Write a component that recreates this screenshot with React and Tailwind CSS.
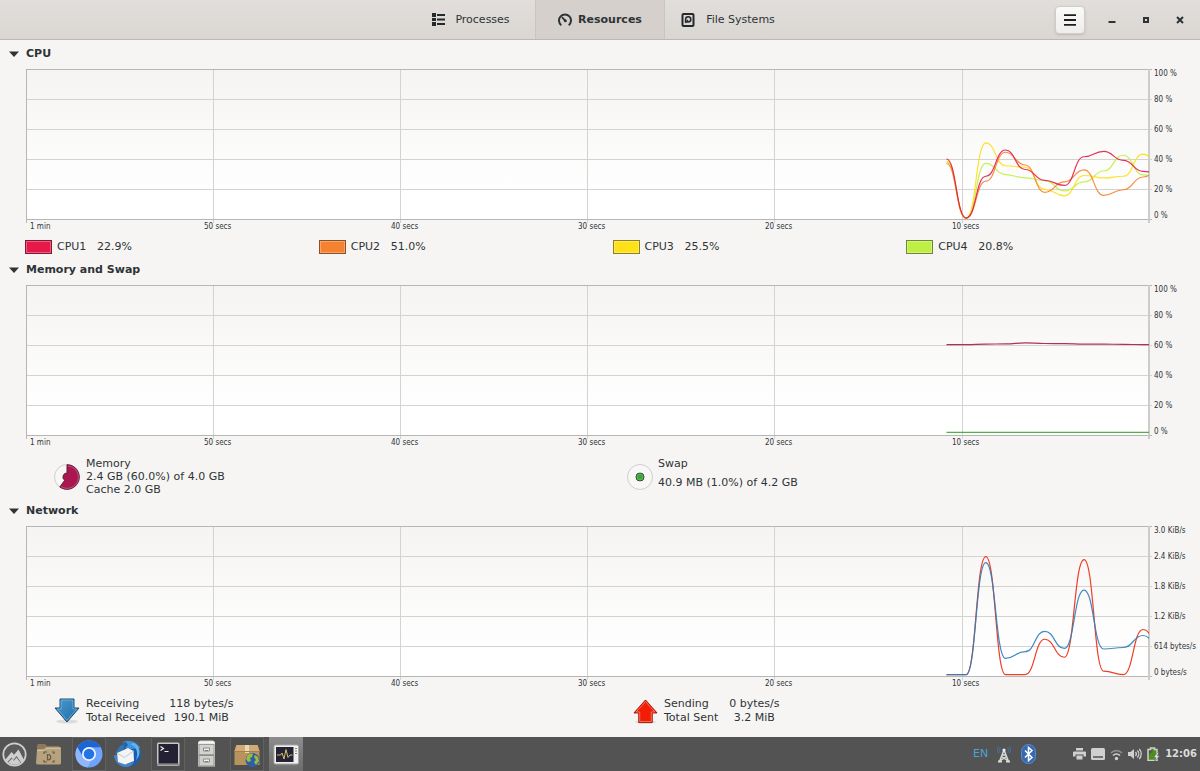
import { useState } from "react";

const CPUS = [
  { name: "CPU1", value: "22.9%", fill: "bg-[#e6194b]", border: "border-[#7d1a33]", inner: "border-[#ef5c80]", color: "#e6194b", data: [40, 0.6, 28.5, 46, 33, 25.8, 22.4, 41.5, 45.1, 39.1, 31.8, 30] },
  { name: "CPU2", value: "51.0%", fill: "bg-[#f58231]", border: "border-[#87512a]", inner: "border-[#f9a468]", color: "#f58231", data: [37, 0.6, 25.2, 44.5, 36, 17.8, 24.7, 32.7, 15.8, 19.5, 28, 34] },
  { name: "CPU3", value: "25.5%", fill: "bg-[#ffe119]", border: "border-[#8c801f]", inner: "border-[#ffea5c]", color: "#ffdf19", data: [38, 0.6, 50.7, 35.5, 34.5, 19.8, 15.4, 29, 27.4, 28.5, 43.2, 34] },
  { name: "CPU4", value: "20.8%", fill: "bg-[#bfef45]", border: "border-[#6e8735]", inner: "border-[#d1f47a]", color: "#bfef45", data: [38.5, 0.6, 37.1, 29.6, 27.4, 25.6, 18.7, 24.7, 32, 42.5, 29.4, 28] },
];

const MEMORY = [
  { color: "#aa1650", data: [60.2, 60.2, 60.6, 60.7, 61.4, 61, 60.9, 60.6, 60.6, 60.4, 60.3, 60.3] },
  { color: "#3fa535", data: [1.7, 1.7, 1.7, 1.7, 1.7, 1.7, 1.7, 1.7, 1.7, 1.7, 1.7, 1.7] },
];

const NETWORK = [
  { color: "#f02810", data: [0.9, 0.9, 79.6, 0.9, 0.9, 24.5, 12.5, 77.6, 3.2, 0.9, 31, 16] },
  { color: "#2a7ebb", data: [0.9, 0.9, 75.6, 11.8, 16.2, 29.8, 18.4, 57.3, 18, 19, 27, 16] },
];

const PERCENT = ["100 %", "80 %", "60 %", "40 %", "20 %", "0 %"];
const RATES = ["3.0 KiB/s", "2.4 KiB/s", "1.8 KiB/s", "1.2 KiB/s", "614 bytes/s", "0 bytes/s"];
const TIMES = ["1 min", "50 secs", "40 secs", "30 secs", "20 secs", "10 secs"];

// plot units
const W = 1123;
const H = 150;
const START = 920.5;
const STEP = 19.65;

const toPath = (data) =>
  data
    .map((v, i) => {
      const x = START + i * STEP;
      const y = H - (v * H) / 100;
      if (i === 0) return `M${x} ${y}`;
      const mid = x - STEP / 2;
      const prev = H - (data[i - 1] * H) / 100;
      return `C${mid} ${prev} ${mid} ${y} ${x} ${y}`;
    })
    .join(" ");

function Chart({ series, labels, id }) {
  return (
    <div>
      <div className="flex pl-[26px] pr-[7px] pb-[2px]">
        <svg
          className="block h-[150px] min-w-0 flex-1 overflow-visible"
          viewBox={`0 0 ${W} ${H}`}
          preserveAspectRatio="none"
          role="img"
          aria-label={`${id} history`}
        >
          <defs>
            <linearGradient id={`bg-${id}`} x1="0" y1="0" x2="0" y2="1">
              <stop offset="0" stopColor="#f5f4f2" />
              <stop offset="0.85" stopColor="#ffffff" />
            </linearGradient>
          </defs>
          <rect width={W} height={H} fill={`url(#bg-${id})`} />
          {[1, 2, 3, 4].map((n) => (
            <path key={n} d={`M0 ${n * 30 + 0.5}H1126`} stroke="#d3d4d2" />
          ))}
          {[1, 2, 3, 4, 5].map((n) => (
            <path key={n} d={`M${Math.floor(n * 187.2) + 0.5} 0V154`} stroke="#d3d4d2" />
          ))}
          <path d="M0 .5H1126M0 150.5H1126M.5 0V154" fill="none" stroke="#b4b7b5" />
          <path d="M1123 0V154" stroke="#cccdca" strokeWidth="2" />
          <svg width={W} height={H} viewBox={`0 0 ${W} ${H}`} preserveAspectRatio="none">
            {series.map((s) => (
              <path
                key={s.color}
                d={toPath(s.data)}
                fill="none"
                stroke={s.color}
                strokeOpacity="0.9"
                strokeWidth="1.2"
                vectorEffect="non-scaling-stroke"
              />
            ))}
          </svg>
        </svg>

        <div className="ml-[5px] w-[39px] pt-[1px] whitespace-nowrap font-['DejaVu_Sans_Condensed','DejaVu_Sans',sans-serif] text-[8px] leading-[8px]">
          {labels.map((l, i) => (
            <div
              key={l}
              className={
                i === 0
                  ? "flex h-[15px] items-start"
                  : i === 5
                    ? "flex h-[15px] items-end"
                    : "flex h-[30px] items-center"
              }
            >
              {l}
            </div>
          ))}
        </div>
      </div>

      {/* TIME AXIS */}
      <div className="grid grid-cols-6 pl-[17px] pr-[61px] font-['DejaVu_Sans_Condensed','DejaVu_Sans',sans-serif] text-[8px] leading-[10px]">
        {TIMES.map((t) => (
          <span key={t} className="first:pl-[13px]">
            {t}
          </span>
        ))}
      </div>
    </div>
  );
}

function Section({ title, children }) {
  const [open, setOpen] = useState(true);

  return (
    <section>
      <h2>
        <button
          type="button"
          aria-expanded={open}
          onClick={() => setOpen(!open)}
          className="flex h-[29px] items-center gap-[7px] pb-[2px] pl-[9px] font-bold"
        >
          <svg className={open ? "size-[10px]" : "size-[10px] -rotate-90"} viewBox="0 0 10 10">
            <path d="M0 2.5h10L5 8z" fill="#2e3436" />
          </svg>
          {title}
        </button>
      </h2>
      {open && children}
    </section>
  );
}

function HeaderBar() {
  return (
    <header className="grid h-10 grid-cols-[1fr_auto_1fr] border-b border-[#bfb8b1] bg-linear-to-b from-[#e1dedb] to-[#dad6d2]">
      <div />
      <nav className="flex">
        <button type="button" className="flex w-32 items-center justify-center gap-[10px]">
          <svg className="size-[13px]" viewBox="0 0 13 13" fill="#24292b">
            <path d="M0 0h4v4H0zM0 5h4v3H0zM0 9h4v4H0zM5 1h8v2H5zM5 5.500h8v2H5zM5 10h8v2H5z" />
          </svg>
          Processes
        </button>
        <button
          type="button"
          className="flex w-[130px] items-center justify-center gap-[6px] border-x border-[#cbc5c0] bg-[#d5d0cc] font-bold"
        >
          <svg className="size-[14px]" viewBox="0 0 14 14" fill="none" stroke="#2e3436">
            <path d="M3.300 12.200A6 6 0 1 1 10.700 12.200" strokeWidth="2" />
            <path d="M4.400 4.600 7.200 7.600" strokeLinecap="round" strokeWidth="1.800" />
            <circle cx="7.300" cy="7.800" r="1.500" fill="#2e3436" stroke="none" />
          </svg>
          Resources
        </button>
        <button type="button" className="flex w-32 items-center justify-center gap-[11px] pr-[2px]">
          <svg className="size-[14px]" viewBox="0 0 14 14" fill="none" stroke="#24292b">
            <rect x="1.500" y="1" width="11" height="12" rx="1" strokeWidth="2" />
            <path d="M4.600 9.600V6.200a2.600 2.600 0 1 1 2.600 2.800H5.800" strokeWidth="1.600" />
            <path d="M4.400 9.800 7 7" strokeWidth="1.500" />
          </svg>
          File Systems
        </button>
      </nav>

      <div className="flex items-center justify-end pr-[3px]">
        <button
          type="button"
          aria-label="Menu"
          className="mr-[10px] flex h-7 w-[30px] items-center justify-center rounded-[4px] border border-[#d0cbc6] bg-linear-to-b from-[#fafaf9] to-[#efedec] shadow-sm"
        >
          <svg className="h-[12px] w-[12px]" viewBox="0 0 12 12" fill="#1c2022">
            <path d="M0 .300h12v1.800H0zM0 5.100h12v1.800H0zM0 9.900h12v1.800H0z" />
          </svg>
        </button>
        <button type="button" aria-label="Minimize" className="flex h-8 w-[34px] items-center justify-center">
          <svg className="size-[8px]" viewBox="0 0 8 8">
            <path d="M.5 5h7v2h-7z" fill="#2e3436" />
          </svg>
        </button>
        <button type="button" aria-label="Maximize" className="flex h-8 w-[34px] items-center justify-center">
          <svg className="size-[6px]" viewBox="0 0 6 6">
            <path d="M1 1h4v4H1z" fill="none" stroke="#2e3436" strokeWidth="2" />
          </svg>
        </button>
        <button type="button" aria-label="Close" className="flex h-8 w-[34px] items-center justify-center">
          <svg className="size-[8px]" viewBox="0 0 8 8">
            <path d="m1 1 6 6M7 1 1 7" stroke="#2e3436" strokeWidth="2" />
          </svg>
        </button>
      </div>
    </header>
  );
}

function Launcher({ label, state, children }) {
  return (
    <button
      type="button"
      aria-label={label}
      className={
        state === "active"
          ? "flex h-[34px] w-[34px] items-center justify-center bg-linear-to-b from-[#8d8d8d] to-[#6c6c6c]"
          : state === "open"
            ? "flex h-[34px] w-[34px] items-center justify-center border border-[#616161] bg-[#4e4e4e]"
            : "flex h-[34px] w-[34px] items-center justify-center"
      }
    >
      <svg className="size-7 shrink-0" viewBox="0 0 28 28">
        {children}
      </svg>
    </button>
  );
}

function Taskbar() {
  return (
    <footer className="flex h-[34px] items-center justify-between bg-[#535353] pl-[2px] pr-[3px]">
      <div className="flex items-center gap-[5px]">
        <button type="button" aria-label="Menu">
          <svg className="size-[25px]" viewBox="0 0 25 25">
            <circle cx="12.5" cy="12.5" r="11.2" fill="#5b5b5b" stroke="#cfcfcf" strokeWidth="1.7" />
            <path d="M3.500 17.500 9.500 10l2.500 2.800L16.500 7.500l5.300 10a10.500 10.500 0 0 1-2.600 3.200L14.500 14l-3 4-2-2.500-4.200 4.700z" fill="#cfcfcf" />
            <path d="M6 20.500 10 16.500l1.800 2.300L14.500 15.500l4 5.300a10.500 10.500 0 0 1-12.500-.3z" fill="#cfcfcf" />
          </svg>
        </button>

        <div className="flex w-[271px] justify-between">
          <Launcher label="Desktop folder">
            <path d="M2 6q0-2 2-2h6l2 2h11q2 0 2 2v4H2z" fill="#8f795c" />
            <path d="M2 10q0-1 1-1h6l2-2h14q1 0 1 1v15q0 1.500-1.500 1.500h-21Q1 24.500 1 23z" fill="#b7a280" />
            <path d="M2 10.500h7l2-2h14" fill="none" stroke="#d1c0a2" />
            <path d="M9 14v-2h3M17 12h2v2M9 20v2h3M17 22h2v-2M12.500 14.500h.5a2.700 2.700 0 0 1 0 5.400h-.5z" fill="none" stroke="#6b5a42" strokeWidth="1.200" />
          </Launcher>
          <Launcher label="Chromium" state="open">
            <circle cx="14" cy="14" r="13.500" fill="#6ea3fb" />
            <path d="M2.300 7.200A13.500 13.500 0 0 1 25.700 7.300H14a6.700 6.700 0 0 0-5.800 10z" fill="#1a66d6" />
            <path d="M2.300 7.200 8.200 17.400A6.700 6.700 0 0 0 16 20.400L12.500 27.500A13.500 13.500 0 0 1 2.300 7.200z" fill="#8fb8fc" />
            <circle cx="14" cy="14" r="7" fill="#f1f5fc" />
            <circle cx="14" cy="14" r="5.300" fill="#2474e8" />
          </Launcher>
          <Launcher label="Thunderbird">
            <path d="M9 3C16-1 27 5 27 15c0 7-7 12.500-14 11.500l7-6L9 8z" fill="#1d5cad" />
            <path d="M9 2c6-3 14 0 17 6l-9 1-8-1z" fill="#3e93dc" />
            <path d="M11 1.500 14 5l-4 4-3-3z" fill="#235f9e" />
            <path d="M16 4c6 2 9 8 6 16 6-6 4-14-2-17z" fill="#60b4ee" />
            <path d="M1 14 6 6l5-2-2 6z" fill="#2f77bd" />
            <path d="M0 15c0 7 6 12 12 12 3 0 7-2 8-5l-8 2c-5 0-9-4-9-9z" fill="#3f87cc" />
            <path d="M3 13 14 8l5.500 3 .5 10-9 3.500-7-2.500z" fill="#f3f4f5" />
            <path d="m3.500 13.500 7 4L19.500 11" fill="none" stroke="#c2c8ce" />
          </Launcher>
          <Launcher label="Terminal" state="open">
            <rect x="3" y="2.500" width="22.500" height="23.500" rx="1.500" fill="#c7c9c4" />
            <path d="M3 24.500h22.500" stroke="#878985" strokeWidth="2" />
            <rect x="4.500" y="4" width="19.500" height="19.500" fill="#252134" />
            <path d="m6.500 6.500 3 2-3 2M10.500 11.500h4" fill="none" stroke="#f0f0f0" strokeWidth="1.200" />
          </Launcher>
          <Launcher label="Files">
            <path d="M5 2.500 7 .500h13l2 2V26.500H5z" fill="#dadbd8" />
            <path d="M5.500 2.500h16" stroke="#f7f7f6" strokeWidth="2" />
            <rect x="6" y="4.500" width="15" height="10" fill="#d3d4d1" stroke="#999c97" />
            <rect x="6" y="15.500" width="15" height="10.500" fill="#cfd0cd" stroke="#8c8f8a" />
            <path d="M10.500 8h6v3h-6zM10.500 19h6v3h-6z" fill="#f1f1f0" stroke="#878a85" />
            <path d="M12 10.500h3M12 21.500h3" stroke="#777" />
          </Launcher>
          <Launcher label="Package manager" state="open">
            <path d="M3.500 5h21l2 6v14h-25V11z" fill="#b9935d" />
            <path d="M3.500 5h21l2 6h-25z" fill="#d0ab76" />
            <path d="M12 5h4v8h-4z" fill="#ead8b8" />
            <path d="M1.500 11.500h25" stroke="#a58150" />
            <circle cx="19.500" cy="20" r="7" fill="#2c5fa9" />
            <path d="M14 16c2-3 5-3 6-2l-1 3-2 1 1 3-3 1-2-3zM22 15l3 2 1 4-3 4-2-3 2-2-2-3z" fill="#9cba3d" />
          </Launcher>
          <Launcher label="System Monitor" state="active">
            <rect x="2" y="5" width="24.500" height="19" rx="1.500" fill="#f0f0ee" stroke="#a9aaa7" />
            <rect x="4" y="7" width="17.500" height="15" fill="#262235" />
            <path d="M5 15h3.500l1.500-2 2 6 2-9.500 2 8L18 15h2.500" fill="none" stroke="#d3c06a" />
            <path d="M23 8.500h2M23 11h2M23 13.500h2" stroke="#888" />
            <path d="M4 25.500h20" stroke="#777" />
          </Launcher>
        </div>
      </div>

      {/* TRAY */}
      <div className="flex items-center">
        <span className="mr-[9px] text-[#4ea1d9]">EN</span>
        <svg className="mr-[10px] h-[17px] w-[14px]" viewBox="0 0 14 17" fill="none">
          <path d="M3.500 1.500a4 4 0 0 0 0 5.500M10.500 1.500a4 4 0 0 1 0 5.500M1.500.500a6 6 0 0 0 0 7M12.500.500a6 6 0 0 1 0 7" stroke="#46729f" />
          <path d="M7 4 2.500 15.500M7 4l4.500 11.500M5 9h4M4.500 10.500l6 4M9.500 10.500l-6 4" stroke="#dadcd8" strokeWidth="1.500" />
          <path d="M1 15.500h4M9 15.500h4" stroke="#dadcd8" strokeWidth="1.800" />
          <circle cx="7" cy="4" r="1.600" fill="#eee" />
        </svg>
        <svg className="mr-[37px] h-[20px] w-[15px]" viewBox="0 0 15 20">
          <rect x=".5" y=".5" width="14" height="19" rx="7" fill="#3569b0" stroke="#5b8ccc" />
          <path d="m4 6.500 7 7L7.500 16.500V3.500L11 6.500l-7 7" fill="none" stroke="#fff" strokeWidth="1.500" />
        </svg>
        <div className="flex items-center gap-[5px]">
          <svg className="h-[12px] w-[13px]" viewBox="0 0 13 12" fill="#d0d0d0">
            <path d="M3 0h7v2.500H3zM1 3.500h11q1 0 1 1V8.500h-2.500v-2h-8v2H0v-4q0-1 1-1zM3.500 7.500h6v4h-6z" />
          </svg>
          <svg className="h-[12px] w-[14px]" viewBox="0 0 14 12">
            <rect width="14" height="12" rx="1.500" fill="#d0d0d0" />
            <path d="M2 9h10" stroke="#535353" strokeWidth="1.500" />
          </svg>
          <svg className="h-[13px] w-[13px]" viewBox="0 0 13 13" fill="none" strokeWidth="1.600">
            <path d="M1 5a7.500 7.500 0 0 1 11 0" stroke="#8e8e8e" />
            <path d="M3 7.500a5 5 0 0 1 7 0" stroke="#d0d0d0" />
            <circle cx="6.500" cy="10.500" r="1.700" fill="#d0d0d0" />
          </svg>
          <svg className="h-[12px] w-[14px]" viewBox="0 0 14 12" fill="none" stroke="#d0d0d0" strokeWidth="1.300">
            <path d="M0 4h2.500L6 1v10L2.500 8H0z" fill="#d0d0d0" stroke="none" />
            <path d="M7.500 4a3 3 0 0 1 0 4M9.300 2.500a5 5 0 0 1 0 7M11.300 1a7.500 7.500 0 0 1 0 10" />
          </svg>
          <svg className="h-[14px] w-[13px]" viewBox="0 0 13 14">
            <path d="M1 2.500h2.500V1h4v1.500H10v11H1z" fill="#4b8f1c" stroke="#d0d0d0" strokeWidth="1.500" />
            <path d="M2 3.500h4L2 8z" fill="#535353" />
            <path d="M10.500 5.500 6.500 10.500h2.300L7.800 14l5-5.200h-2.500l1.700-3.300z" fill="#e2e2e2" stroke="#535353" strokeWidth=".5" />
          </svg>
        </div>
        <time className="ml-[5px] text-[10px] font-bold text-[#dcdcdc]">12:06</time>
      </div>
    </footer>
  );
}

export default function App() {
  return (
    <div className="flex min-h-screen flex-col bg-[#f6f5f4] font-['DejaVu_Sans',sans-serif] text-[11px] leading-[14px] text-[#2e3436]">
      <HeaderBar />

      <main className="flex-1">
        {/* CPU */}
        <Section title="CPU">
          <Chart id="cpu" series={[...CPUS].reverse()} labels={PERCENT} />
          <div className="grid grid-cols-4 pt-[7px] pb-[1px] pl-[25px]">
            {CPUS.map((c) => (
              <div key={c.name} className="flex h-4 items-center">
                <button
                  type="button"
                  aria-label={`${c.name} color`}
                  className={`h-[14px] w-[27px] border ${c.border}`}
                >
                  <span className={`block size-full border ${c.inner} ${c.fill}`} />
                </button>
                <span className="ml-[5px] w-10">{c.name}</span>
                <span>{c.value}</span>
              </div>
            ))}
          </div>
        </Section>

        {/* MEMORY */}
        <Section title="Memory and Swap">
          <Chart id="memory" series={MEMORY} labels={PERCENT} />
          <div className="grid grid-cols-2 pt-[9px] pb-[1px] pl-[54px] leading-[13px]">
            <div className="flex items-center gap-[6px]">
              <svg className="size-[26px]" viewBox="0 0 26 26">
                <circle cx="13" cy="13" r="12.500" fill="#f8f7f6" stroke="#cfcfcd" />
                <path d="M13 .7A12.300 12.300 0 1 1 5.800 23L10.700 16.300A4 4 0 0 1 13 9z" fill="#aa1650" stroke="#5c2138" />
                <path d="M14 2A11.200 11.200 0 1 1 7.300 22.700" fill="none" stroke="#cf6a92" strokeWidth=".7" />
              </svg>
              <div>
                <p>Memory</p>
                <p>2.4 GB (60.0%) of 4.0 GB</p>
                <p>Cache 2.0 GB</p>
              </div>
            </div>
            <div className="flex items-center gap-[5px]">
              <svg className="size-[26px]" viewBox="0 0 26 26">
                <circle cx="13" cy="13" r="12.500" fill="#f8f7f6" stroke="#cfcfcd" />
                <circle cx="13" cy="13" r="4" fill="#3fa535" stroke="#33492f" />
                <circle cx="13" cy="13" r="3" fill="none" stroke="#7cc274" strokeWidth=".6" />
              </svg>
              <div className="space-y-[6px] self-start">
                <p>Swap</p>
                <p>40.9 MB (1.0%) of 4.2 GB</p>
              </div>
            </div>
          </div>
        </Section>

        {/* NETWORK */}
        <Section title="Network">
          <Chart id="network" series={NETWORK} labels={RATES} />
          <div className="grid grid-cols-2 pt-[8px] pb-[12px] pl-[42px]">
            <div className="flex items-center gap-[6px] pl-3">
              <svg className="size-[26px]" viewBox="0 0 26 26">
                <defs>
                  <linearGradient id="down" x1="0" y1="0" x2="1" y2="1">
                    <stop offset="0" stopColor="#4f9ace" />
                    <stop offset="1" stopColor="#1b6ca6" />
                  </linearGradient>
                </defs>
                <ellipse cx="13" cy="23.500" rx="11" ry="2" fill="#000" opacity=".1" />
                <path d="M6 1h14v9h5L13 24 1 10h5z" fill="url(#down)" stroke="#1d4b6e" />
                <path d="M7.100 2h11.800v9h3.800L13 22.300 3.300 11h3.800z" fill="none" stroke="#8cc2e6" strokeWidth=".6" />
              </svg>
              <dl className="grid grid-cols-[auto_auto] gap-x-[4px]">
                <dt>Receiving</dt>
                <dd className="text-center">118 bytes/s</dd>
                <dt>Total Received</dt>
                <dd className="text-center">190.1 MiB</dd>
              </dl>
            </div>
            <div className="flex items-center gap-[6px] pl-3">
              <svg className="size-[25px]" viewBox="0 0 26 26">
                <ellipse cx="13" cy="24" rx="11" ry="1.800" fill="#000" opacity=".1" />
                <path d="M13 1 25 14.500h-5v10H6v-10H1z" fill="#f21d05" stroke="#9c1206" />
                <path d="M13 2.700 22.700 13.500H19v10H7v-10H3.300z" fill="none" stroke="#ff8a76" strokeWidth=".8" />
              </svg>
              <dl className="grid grid-cols-[auto_auto] gap-x-[11px]">
                <dt>Sending</dt>
                <dd className="text-center">0 bytes/s</dd>
                <dt>Total Sent</dt>
                <dd className="text-center">3.2 MiB</dd>
              </dl>
            </div>
          </div>
        </Section>
      </main>

      <Taskbar />
    </div>
  );
}
